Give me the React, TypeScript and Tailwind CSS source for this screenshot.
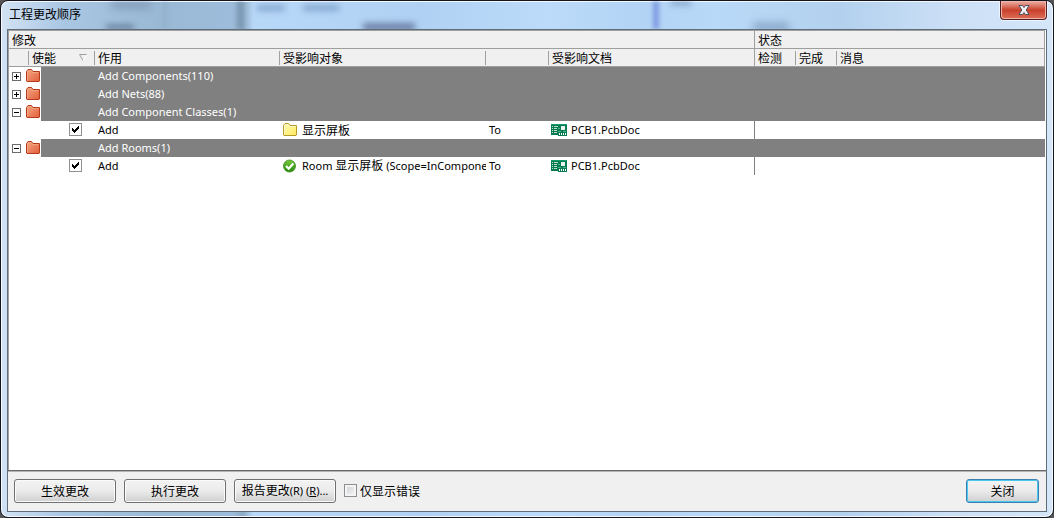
import React, { useState } from 'react';

const cjk = "font-['Noto_Sans_CJK_SC',sans-serif] text-[12px]";

function Folder({ yellow = false }: { yellow?: boolean }) {
  const id = yellow ? 'folder-yellow' : 'folder-red';
  return (
    <svg width="15" height="13" viewBox="0 0 15 13" className="mb-px shrink-0" aria-hidden="true">
      <defs>
        <linearGradient id={id} x1="0" y1="0" x2="1" y2="1">
          <stop offset="0" stopColor={yellow ? '#fffbb4' : '#f6a984'} />
          <stop offset="1" stopColor={yellow ? '#ffe95e' : '#e05f3a'} />
        </linearGradient>
      </defs>
      <path
        d="M.5 12V2.5L2 .5h3.500L7 2.500h6.500V12l-.5.5H1z"
        fill={`url(#${id})`}
        stroke={yellow ? '#b59a25' : '#b5391a'}
      />
      <path d="M1.500 11.500v-8L2.500 1.500H5l1.500 2h6" fill="none" stroke={yellow ? '#fffde0' : '#f4ae8c'} strokeWidth=".7" />
    </svg>
  );
}

function Toggle({ open, onClick, label }: { open: boolean; onClick: () => void; label: string }) {
  return (
    <button type="button" onClick={onClick} aria-expanded={open} aria-label={label} className="shrink-0">
      <svg width="9" height="9" viewBox="0 0 9 9" className="block" shapeRendering="crispEdges">
        <rect x=".5" y=".5" width="8" height="8" fill="#fff" stroke="#6b6b6b" />
        <path d="M2 4.5h5" stroke="#000" />
        {!open && <path d="M4.5 2v5" stroke="#000" />}
      </svg>
    </button>
  );
}

function Ok() {
  return (
    <svg width="15" height="14" viewBox="0 0 15 14" className="shrink-0" aria-hidden="true">
      <defs>
        <linearGradient id="ok" x1="0" y1="0" x2="0" y2="1">
          <stop offset="0" stopColor="#7cc93c" />
          <stop offset="1" stopColor="#238a0c" />
        </linearGradient>
      </defs>
      <circle cx="6.500" cy="7" r="6" fill="url(#ok)" stroke="#35861a" strokeWidth=".8" />
      <path d="M3 7l2.700 2.700L10.300 4.600" fill="none" stroke="#fff" strokeWidth="2.200" />
    </svg>
  );
}

function Pcb() {
  return (
    <svg width="16" height="12" viewBox="0 0 16 12" className="shrink-0" shapeRendering="crispEdges" aria-hidden="true">
      <path d="M0 0h16v12H7v-1H0z" fill="#067a50" />
      <path d="M0 0h16v1H0z" fill="#149b6b" />
      <path d="M1 2h1v1H1zM3 2h4v1H3zM1 4h1v1H1zM3 4h3v1H3zM1 6h1v1H1zM3 6h3v1H3zM1 8h1v1H1zM3 8h3v1H3z" fill="#b9dccb" />
      <path d="M10 2h4v4h-4z" fill="#e9f3ee" />
      <path d="M7 4h2v1H7zM7 7h3v1H7zM12 7h3v1h-3z" fill="#4cb58b" />
      <path d="M8 9h1v2H8zM10 9h1v2h-1zM12 9h1v2h-1zM14 9h1v2h-1z" fill="#fff" />
    </svg>
  );
}

function EnableBox({ label }: { label: string }) {
  return (
    <span className="mb-0.5 grid h-[13px] w-[13px] shrink-0 place-items-center">
      <input
        type="checkbox"
        defaultChecked
        aria-label={label}
        className="peer col-start-1 row-start-1 h-[13px] w-[13px] appearance-none border border-[#8e8f8f] bg-white"
      />
      <svg
        width="7"
        height="7"
        viewBox="0 0 7 7"
        shapeRendering="crispEdges"
        className="pointer-events-none invisible col-start-1 row-start-1 peer-checked:visible"
      >
        <path d="M0 2h1v1h1v1h1V3h1V2h1V1h1V0h1v3H6v1H5v1H4v1H3v1H2V6H1V5H0z" fill="#000" />
      </svg>
    </span>
  );
}

function Head({ children, label, full = false }: { children?: React.ReactNode; label?: string; full?: boolean }) {
  return (
    <th className="h-[18px] border-b border-[#9d9f9d] bg-[#f0f0f0] p-0 text-left font-normal" aria-label={label}>
      <div className={`flex items-center border-r border-[#a0a0a0] pl-[3px] ${full ? 'h-[17px]' : 'h-[14px]'}`}>
        <span className={`flex-1 leading-[14px] ${cjk}`}>{children}</span>
      </div>
    </th>
  );
}

type Item = { name: React.ReactNode; icon: React.ReactNode; key: string };
type Group = { title: string; open: boolean; items: Item[] };

const initial: Group[] = [
  { title: 'Add Components(110)', open: false, items: [] },
  { title: 'Add Nets(88)', open: false, items: [] },
  {
    title: 'Add Component Classes(1)',
    open: true,
    items: [{ key: 'class', icon: <Folder yellow />, name: <span className={cjk}>显示屏板</span> }],
  },
  {
    title: 'Add Rooms(1)',
    open: true,
    items: [
      {
        key: 'room',
        icon: <Ok />,
        name: (
          <>
            Room <span className={`leading-none ${cjk}`}>显示屏板</span> (Scope=InCompone
          </>
        ),
      },
    ],
  },
];

function Btn({ children, primary = false }: { children: React.ReactNode; primary?: boolean }) {
  return (
    <button
      type="button"
      className={`flex h-6 items-center justify-center rounded-[3px] border bg-linear-to-b from-[#f3f3f3] from-0% via-[#ebebeb] via-50% to-[#cfcfcf] to-100% whitespace-nowrap ${
        primary
          ? 'w-[73px] border-[#3c7fb1] shadow-[inset_0_0_0_1px_#48c8f0]'
          : 'w-[102px] border-[#707070] shadow-[inset_0_0_0_1px_#fafafa]'
      }`}
    >
      <span className={cjk}>{children}</span>
    </button>
  );
}

export default function App() {
  const [groups, setGroups] = useState(initial);
  const flip = (i: number) => setGroups(groups.map((g, n) => (n === i ? { ...g, open: !g.open } : g)));

  return (
    <div className="bg-[#555]">
      <main className="relative flex min-h-screen flex-col overflow-hidden rounded-lg border border-[#15151f] bg-[linear-gradient(90deg,#d2e2f4_0%,#a9c6e3_6%,#9ab9d5_15%,#9dbcdb_22%,#8eabc5_23%,#b8d8f8_24%,#b0d1f3_40%,#bcdbfa_52%,#b2d3f4_61%,#b9d9f8_68%,#b3d1ee_80%,#cbdff6_90%,#d5e6f9_100%)] px-1.5 pb-[5px] font-['Noto_Sans',sans-serif] text-[11px] text-black shadow-[inset_0_0_0_1px_#f4f9ff]">
        <div className="pointer-events-none absolute inset-x-0 top-0 h-7 overflow-hidden" aria-hidden="true">
          <i className="absolute top-0 left-[110px] h-2 w-10 bg-[#6f87a5]/60 blur-[4px]" />
          <i className="absolute top-6 left-[105px] h-1 w-7 bg-[#344861]/70 blur-[3px]" />
          <i className="absolute top-0 left-[162px] h-7 w-1 bg-[#8eaac6]/60 blur-[2px]" />
          <i className="absolute top-0 left-[236px] h-7 w-1.5 bg-[#66829e]/50 blur-[2px]" />
          <i className="absolute top-1 left-[256px] h-1.5 w-7 bg-[#6387b5]/60 blur-[3px]" />
          <i className="absolute top-1 left-[302px] h-1.5 w-9 bg-[#6387b5]/60 blur-[3px]" />
          <i className="absolute top-[22px] left-[362px] h-2 w-[52px] bg-[#505d86]/70 blur-[3px]" />
          <i className="absolute top-0 left-[652px] h-7 w-1.5 bg-[#6b86dc]/70 blur-[2px]" />
          <i className="absolute top-0 left-[670px] h-1 w-5 bg-[#6381a5]/70 blur-[3px]" />
          <i className="absolute top-[22px] left-[752px] h-2 w-9 bg-[#6381a5]/60 blur-[4px]" />
        </div>
        <header className="relative flex h-7 shrink-0 items-start justify-between">
          <h1 className={`pt-1 pl-0.5 leading-[18px] ${cjk}`}>工程更改顺序</h1>
          <button
            type="button"
            aria-label="关闭窗口"
            className="flex h-[19px] w-[47px] items-center justify-center rounded-b-[4px] border border-t-0 border-[#541f22] bg-linear-to-b from-[#eab0a6] from-0% via-[#c9402d] via-50% to-[#dd6d55] to-100% shadow-[inset_0_0_0_1px_#eeb4a8,0_0_0_1px_#ecf4fd]"
          >
            <svg width="12" height="10" viewBox="0 0 12 10" aria-hidden="true">
              <path d="M1 .5h3.500L6 2.500 7.500.5H11L8.200 5 11 9.500H7.500L6 7.500 4.500 9.500H1L3.800 5z" fill="#f4f4f4" stroke="#4a5064" />
            </svg>
          </button>
        </header>

        <section className="relative flex flex-1 flex-col border border-[#5f6d7a] bg-[#f0f0f0]">
          <div className="flex flex-1 flex-col border-b border-[#696969] bg-white pr-px">
            <div className="flex-1 border-t border-l border-[#a0a0a0]">
              <table className="w-full table-fixed border-separate border-spacing-0">
                <colgroup>
                  <col className="w-5" />
                  <col className="w-[66px]" />
                  <col className="w-[185px]" />
                  <col className="w-[206px]" />
                  <col className="w-[63px]" />
                  <col className="w-[206px]" />
                  <col className="w-[41px]" />
                  <col className="w-[41px]" />
                  <col />
                </colgroup>
                <thead>
                  <tr>
                    <th colSpan={6} className={`h-[18px] border-r border-b border-[#9d9f9d] bg-[#f0f0f0] p-0 pl-[3px] text-left leading-[17px] font-normal ${cjk}`}>修改</th>
                    <th colSpan={3} className={`h-[18px] border-r border-b border-[#9d9f9d] bg-[#f0f0f0] p-0 pl-[3px] text-left leading-[17px] font-normal ${cjk}`}>状态</th>
                  </tr>
                  <tr>
                    <Head label="展开" />
                    <Head>
                      <span className="flex items-center justify-between pr-1.5">
                        使能
                        <svg width="9" height="7" viewBox="0 0 9 7" aria-hidden="true">
                          <path d="M8 .5H.5L4 6.500" fill="none" stroke="#a0a0a0" />
                          <path d="M4.500 6.500L8 .5" stroke="#fff" />
                        </svg>
                      </span>
                    </Head>
                    <Head>作用</Head>
                    <Head>受影响对象</Head>
                    <Head label="方向" />
                    <Head full>受影响文档</Head>
                    <Head>检测</Head>
                    <Head>完成</Head>
                    <Head full>消息</Head>
                  </tr>
                </thead>
                <tbody>
                  {groups.map((g, i) => (
                    <React.Fragment key={g.title}>
                      <tr>
                        <td colSpan={2} className="h-[18px] p-0">
                          <div className="flex h-[18px]">
                            <div className="flex w-8 items-center gap-[5px] pl-[3px]">
                              <Toggle open={g.open} onClick={() => flip(i)} label={g.title} />
                              <Folder />
                            </div>
                            <div className="flex-1 bg-[#808080]" />
                          </div>
                        </td>
                        <td colSpan={7} className="h-[18px] bg-[#808080] p-0 pl-[3px] leading-[18px] text-white">{g.title}</td>
                      </tr>
                      {g.open &&
                        g.items.map((it) => (
                          <tr key={it.key}>
                            <td className="h-[18px] p-0" />
                            <td className="h-[18px] p-0">
                              <div className="flex justify-end pr-[13px]"><EnableBox label={`Add ${it.key}`} /></div>
                            </td>
                            <td className="p-0 pl-[3px] leading-[18px]">Add</td>
                            <td className="p-0 pl-[3px]">
                              <div className="flex h-[18px] items-center gap-1 overflow-hidden leading-[18px] whitespace-nowrap">
                                {it.icon}
                                <span className="overflow-hidden">{it.name}</span>
                              </div>
                            </td>
                            <td className="p-0 pl-[3px] leading-[18px]">To</td>
                            <td className="border-r border-[#808080] p-0 pl-0.5">
                              <div className="flex h-[18px] items-center gap-1 leading-[18px]"><Pcb />PCB1.PcbDoc</div>
                            </td>
                            <td className="p-0" />
                            <td className="p-0" />
                            <td className="p-0" />
                          </tr>
                        ))}
                    </React.Fragment>
                  ))}
                </tbody>
              </table>
            </div>
          </div>
          <footer className="flex h-10 shrink-0 items-center justify-between border-t border-[#b4b4b4] pr-[7px] pb-0.5 pl-1.5">
            <div className="flex items-center gap-2">
              <Btn>生效更改</Btn>
              <Btn>执行更改</Btn>
              <Btn>
                报告更改<span className="font-['Noto_Sans',sans-serif] text-[11px]">(R) (<u>R</u>)...</span>
              </Btn>
              <label className="flex items-center gap-[3px]">
                <input
                  type="checkbox"
                  className="h-[13px] w-[13px] appearance-none border border-[#8e8f8f] bg-linear-to-br from-[#cdd1d6] to-[#f6f6f6] shadow-[inset_0_0_0_2px_#f4f4f4] checked:bg-[#3c7fb1]"
                />
                <span className={cjk}>仅显示错误</span>
              </label>
            </div>
            <Btn primary>关闭</Btn>
          </footer>
        </section>
      </main>
    </div>
  );
}
